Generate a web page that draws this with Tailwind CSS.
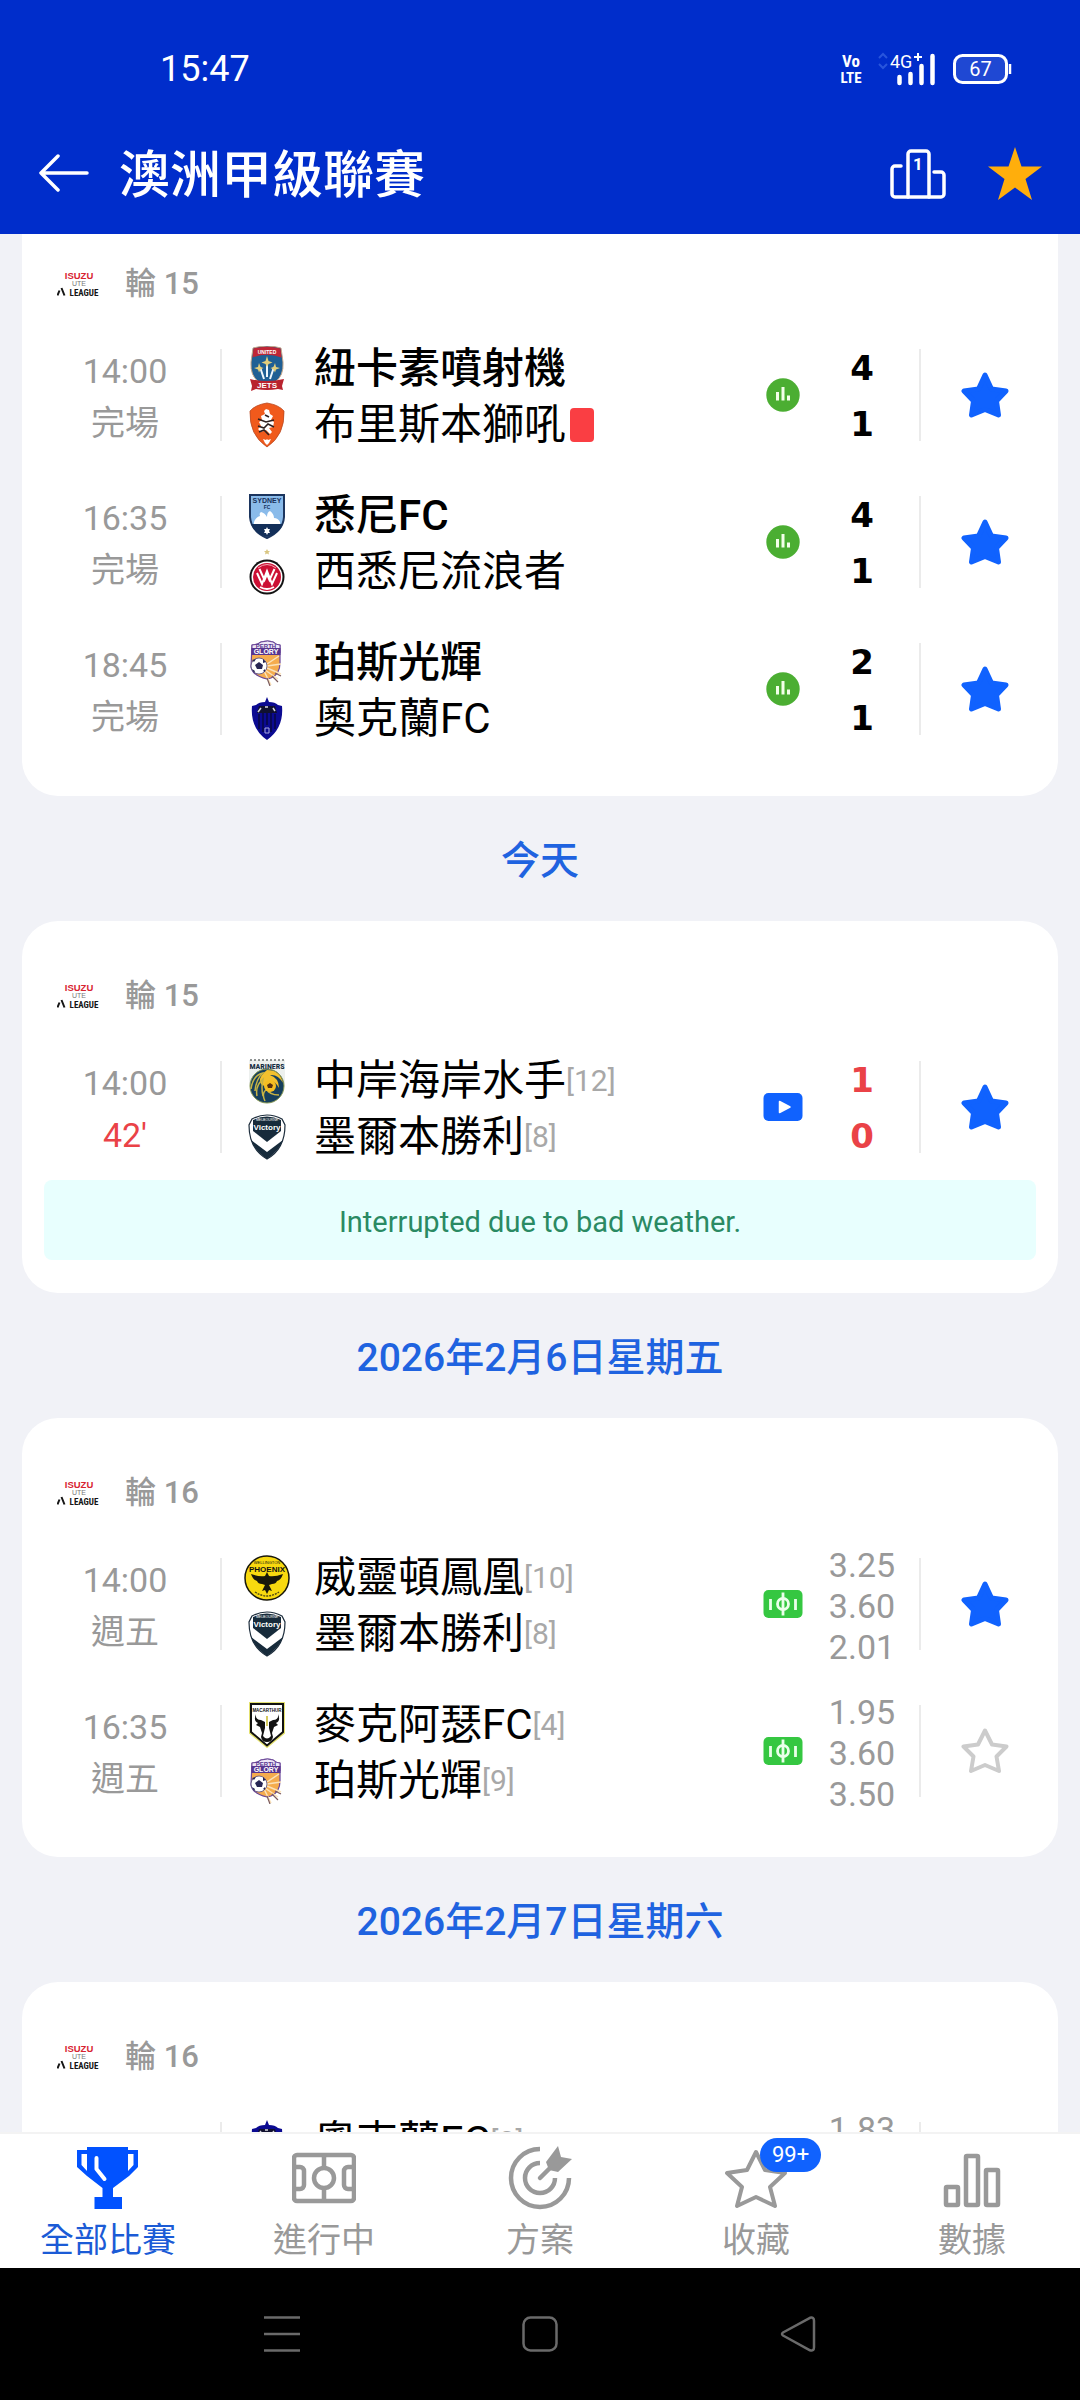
<!DOCTYPE html>
<html lang="zh-Hant"><head>
<meta charset="utf-8"/>
<meta content="width=device-width, initial-scale=1.0" name="viewport"/>
<title>澳洲甲級聯賽</title>
<script src="https://cdn.jsdelivr.net/npm/@tailwindcss/browser@4"></script>
<style>
        body {
            font-family: Roboto, 'Noto Sans CJK TC', sans-serif;
        }
        .font-score {
            font-family: 'DejaVu Sans', sans-serif;
        }
        .font-narrow {
            font-family: 'Liberation Sans Narrow', 'Roboto Condensed', Roboto, sans-serif;
        }
    </style>
</head>
<body class="flex h-screen flex-col bg-[#f1f2f7] text-black">

<!-- Shared icons and club crests -->
<svg class="hidden" xmlns="http://www.w3.org/2000/svg">
<symbol id="star" viewBox="0 0 48 46">
<path d="M24 3 L30.5 17 L45 19 L35.5 29 L37.5 43 L24 37.5 L10.5 43 L12.5 29 L3 19 L17.5 17Z" fill="#1062fe" stroke="#1062fe" stroke-width="5" stroke-linejoin="round"/>
</symbol>
<symbol id="star-outline" viewBox="0 0 48 46">
<path d="M24 2.5 L31 16.5 L45.5 18.5 L35.5 28.5 L38 43 L24 37 L10 43 L12.5 28.5 L2.5 18.5 L17 16.5Z" fill="none" stroke="#ccc" stroke-width="4" stroke-linejoin="round"/>
</symbol>
<symbol id="result" viewBox="0 0 40 34">
<circle cx="20" cy="17" r="16.7" fill="#4bae32"/>
<path d="M14.5 14v8.500M20 9v13.500M25.500 17.500v5" stroke="#f3ffe9" stroke-width="3"/>
</symbol>
<symbol id="video" viewBox="0 0 40 30">
<rect x="0.5" y="1" width="39" height="28" rx="5" fill="#1062fe"/>
<path d="M16.5 9.5v11l10.500-5.500z" fill="#fff" stroke="#fff" stroke-width="1.5" stroke-linejoin="round"/>
</symbol>
<symbol id="pitch" viewBox="0 0 40 30">
<rect x="0.5" y="1" width="39" height="28" rx="5" fill="#35c741"/>
<g fill="none" stroke="#eaffea" stroke-width="2.8"><circle cx="20" cy="15" r="5.5"/><path d="M20 3.500v23M7.500 10v11M32.500 10v11"/></g>
</symbol>
<symbol id="aleague" viewBox="0 0 44 26">
<text x="22" y="7.5" font-family="Liberation Sans" font-size="9.5" font-weight="700" text-anchor="middle" fill="#d8232f">ISUZU</text>
<text x="22" y="14.5" font-family="Liberation Sans" font-size="7" text-anchor="middle" fill="#777">UTE</text>
<path d="M0.5 24.500l2-5M4.500 17l3 7.500" stroke="#151515" stroke-width="2"/>
<text class="font-narrow" x="27" y="24.5" font-size="9" font-weight="700" text-anchor="middle" fill="#151515">LEAGUE</text>
</symbol>
<symbol id="jets" viewBox="0 0 44 46">
<path d="M8 2q14-4 28 0l2 14q1 14-8 20H14Q5 30 6 16z" fill="#1f5f94" stroke="#c9a98a" stroke-width="1"/>
<path d="M8.500 2.500q13.500-3.500 27 0l1 9Q22 6 7.500 11.500z" fill="#c02636"/>
<text x="22" y="8" font-family="Liberation Sans" font-size="5" font-weight="700" text-anchor="middle" fill="#fff">UNITED</text>
<path d="M22 14v17M15 21l4 12M29 21l-4 12" stroke="#eef6fb" stroke-width="2"/>
<path d="M22 10l1.500 5 4 1.500-4 1.500-1.500 3-1.500-3-4-1.500 4-1.500zM14 17l1.500 4 3 1-3 1.500-1.500 3-1-3-4-1.500 4-1zM30 17l1 4 4 1-4 1.500-1 3-1.500-3-3-1.500 3-1z" fill="#e2ce7c"/>
<path d="M5 33q17 4 34 0l-2 7 1 4-5-1q-11 2-22 0l-5 2 1-5z" fill="#b9232e"/>
<text x="22" y="42" font-family="Liberation Sans" font-size="8" font-weight="700" text-anchor="middle" fill="#fff">JETS</text>
</symbol>
<symbol id="roar" viewBox="0 0 44 46">
<path d="M22 1Q34 3 39 9q1 24-17 36Q4 33 5 9q5-6 17-8z" fill="#f05a1c" stroke="#b94b25" stroke-width="0.8"/>
<path d="M21 7l3 1 1 4 3 2-2 4 3 2-1 5-4 1 3 4-2 2-4-4-5 2-3-3 3-3-2-4 3-2-1-4 4-2-1-3z" fill="#fff"/>
<path d="M13 17l8 3 8-2M13 24l6 2 4-4 6 3M14 30l5-2 5 5M20 13l4 2" fill="none" stroke="#2e2020" stroke-width="1.6"/>
<path d="M18 37l3 1 1-1 1 1 3-1-2 4-2 2-2-2z" fill="#fff"/>
</symbol>
<symbol id="sydney" viewBox="0 0 44 46">
<path d="M5 2h34v22q-1 14-17 21Q6 38 5 24z" fill="#8abbea" stroke="#1c355e" stroke-width="2"/>
<path d="M6 31h32q-3 9-16 13Q9 40 6 31z" fill="#132f59"/>
<text x="22" y="10" font-family="Liberation Sans" font-size="7" font-weight="700" text-anchor="middle" fill="#17315b">SYDNEY</text>
<text x="22" y="16" font-family="Liberation Sans" font-size="5" font-weight="700" text-anchor="middle" fill="#17315b">FC</text>
<path d="M9 29q2-5 6-6-1-3 1-4 4 1 6 5 0-5 3-6 4 3 4 7 4 0 6 4v2H9z" fill="#fff"/>
<path d="M22 34l1 2h2l-1 2 1 2h-2l-1 2-1-2h-2l1-2-1-2h2z" fill="#fff"/>
</symbol>
<symbol id="wanderers" viewBox="0 0 44 46">
<path d="M22 0l1 2h2l-1.500 1.500.5 2-2-1-2 1 .5-2L19 2h2z" fill="#d9c682"/>
<circle cx="22" cy="28" r="17.5" fill="#121212"/>
<circle cx="22" cy="28" r="15.5" fill="#fff"/>
<circle cx="22" cy="28" r="14" fill="#cc1034"/>
<path d="M12 24l5 11 5-13 5 13 5-11M14.500 20l5 11 2.500-6 2.500 6 5-11M15 38q7 4 14 0" fill="none" stroke="#fff" stroke-width="2"/>
<path d="M13 19q9-7 18 0" fill="none" stroke="#f3a7b2" stroke-width="1"/>
</symbol>
<symbol id="glory" viewBox="0 0 44 46">
<path d="M7 5q6 0 9-3 7-2 12 0 3 3 7 3v18q0 11-9 15l-4 1Q8 36 6 27z" fill="#f5ac4e" stroke="#6a4799" stroke-width="1.2"/>
<path d="M7 5q6 0 9-3 7-2 12 0 3 3 7 3v8H7z" fill="#eee7f7" stroke="#6a4799" stroke-width="1"/>
<path d="M6.500 8h29v7h-29z" fill="#57358f"/>
<text x="21" y="7.5" font-family="Liberation Sans" font-size="6" font-weight="700" text-anchor="middle" fill="#57358f">PERTH</text>
<text x="21" y="14" font-family="Liberation Sans" font-size="7" font-weight="700" text-anchor="middle" fill="#fff">GLORY</text>
<path d="M22 24l12-8M22 26l14-2M22 28l14 6M20 30l13 9M19 31l7 14" stroke="#fbe3bb" stroke-width="1.5"/>
<path d="M30 33l6 3M27 36l6 6M22 38l3 8" stroke="#7b5a5c" stroke-width="1.2"/>
<circle cx="14" cy="26" r="8" fill="#fff" stroke="#50477a" stroke-width="0.8"/>
<path d="M14 22l4 3-1 4h-5l-2-4zM7 20l4-1-2 3zM18 19l3 3-3 1zM7 29l3 2-1 2zM18 31l2-2v3z" fill="#272653"/>
</symbol>
<symbol id="auckland" viewBox="0 0 44 46">
<path d="M22 1l2 5q6 0 9 3l4 1q2 22-15 34Q5 32 7 10l4-1q3-3 9-3z" fill="#0b0a91"/>
<path d="M14 10h16l2 7H12z" fill="#10102f"/>
<path d="M14 18v15M18 17v19M22 17v12M26 17v19M30 18v15" stroke="#080843" stroke-width="1.5"/>
<path d="M13 16l3-4M20 11h3M28 12l2 3" stroke="#d7d7df" stroke-width="1.5"/>
<path d="M20 32h4v5h-4z" fill="none" stroke="#aaa9df" stroke-width="1"/>
</symbol>
<symbol id="mariners" viewBox="0 0 44 46">
<path d="M4 2h36v21q0 15-18 22Q4 38 4 23z" fill="#edf0ee"/>
<ellipse cx="22" cy="28" rx="17" ry="17" fill="#163f5c" stroke="#8b9b55" stroke-width="1"/>
<path d="M22 12q13 0 16 13-5-9-13-8 9 3 9 13-4-8-10-7 6 6-1 12 0-7-6-8-6-6 5-15z" fill="#f3c12e"/>
<path d="M6 31q2-14 12-16-7 6-8 18M12 38q-2-10 6-17-2 9 0 17M20 43q-4-8 2-12 2 6 12 6" fill="none" stroke="#c7b444" stroke-width="1.5"/>
<circle cx="25" cy="28" r="6" fill="#f5be22"/><path d="M25 25l3 2-1 3h-4l-1-3z" fill="#57300e"/>
<text class="font-narrow" x="22" y="11" font-size="8" font-weight="700" text-anchor="middle" fill="#132c40">MARINERS</text>
<path d="M5 2h34" stroke="#6b7070" stroke-width="1.5" stroke-dasharray="2 2"/>
</symbol>
<symbol id="victory" viewBox="0 0 44 46">
<path d="M7 5q15-8 30 0l3 6q0 24-18 34Q4 35 4 11z" fill="#fff" stroke="#1c2c3b" stroke-width="1.2"/>
<path d="M8 6q14-7 28 0v11L22 28 8 17z" fill="#172b3b"/>
<path d="M6 26q4 11 16 19 12-8 16-19l-16 12z" fill="#172b3b"/>
<text x="22" y="7" font-family="Liberation Sans" font-size="3.5" text-anchor="middle" fill="#fff">MELBOURNE</text>
<text x="22" y="16" font-family="Liberation Sans" font-size="8" font-weight="700" text-anchor="middle" fill="#fff">Victory</text>
</symbol>
<symbol id="phoenix" viewBox="0 0 46 46">
<circle cx="23" cy="23" r="22" fill="#f8d90f" stroke="#19180b" stroke-width="1.5"/>
<text x="23" y="8.5" font-family="Liberation Sans" font-size="4" text-anchor="middle" fill="#111">WELLINGTON</text>
<text x="23" y="16.5" font-family="Liberation Sans" font-size="8" font-weight="700" text-anchor="middle" fill="#111">PHOENIX</text>
<path d="M23 17l2 4q6 1 14-2-2 6-6 7-1 3-5 3l-3 1 3 6-3-1-2 4-2-4-3 1 3-6-3-1q-4 0-5-3-4-1-6-7 8 3 14 2z" fill="#19180b"/>
<path d="M11 37q12 8 24 0" fill="none" stroke="#504a12" stroke-width="1.5" stroke-dasharray="2 1"/>
</symbol>
<symbol id="macarthur" viewBox="0 0 44 46">
<path d="M5 1h34v30L22 45 5 31z" fill="#fff" stroke="#e4e16e" stroke-width="2"/>
<path d="M6 2h32v28L22 43.500 6 30z" fill="#fff" stroke="#111" stroke-width="2"/>
<text x="22" y="9.5" font-family="Liberation Sans" font-size="4.5" font-weight="700" text-anchor="middle" fill="#111">MACARTHUR</text>
<path d="M11 12q-1 6 5 6l4 2v6l-2 8q4 5 8 0l-2-8v-6l4-2q6 0 5-6 3 7-2 9l2 2-4 2-2 6 1 4q-1 5-6 5t-6-5l1-4-2-6-4-2 2-2q-5-2-2-9z" fill="#111"/>
<path d="M22 14v10" stroke="#d5ca5d" stroke-width="2"/>
<path d="M19 34h2M23 34h2" stroke="#fff" stroke-width="1"/>
</symbol>
</svg>

<header class="bg-[#002dcb] text-white">
<div class="flex h-[138px] items-center justify-between pr-[68px] pl-[160px]">
<span class="text-[36px]">15:47</span>
<div class="flex items-center gap-4">
<svg class="h-8 w-6 overflow-visible" viewBox="0 0 24 32" fill="currentColor" font-weight="700">
<text class="font-narrow" x="13" y="14" font-size="17" text-anchor="middle">Vo</text>
<text class="font-narrow" x="13" y="30" font-size="15" text-anchor="middle">LTE</text>
</svg>
<svg class="h-8 w-[58px] overflow-visible" viewBox="0 0 58 32" fill="none" stroke="currentColor">
<path d="M1 5l4-4 4 4M1 11l4 4 4-4" stroke="#2855dc" stroke-width="2"/>
<text x="12" y="15" font-size="18" fill="currentColor" stroke="none">4G</text>
<path d="M36 4h8M40 0v8" stroke-width="2"/>
<path d="M21.500 24v6M32.500 21v9M43.500 13v17M54.500 3v27" stroke-width="4.5" stroke-linecap="round"/>
</svg>
<svg class="h-8 w-[60px]" viewBox="0 0 60 32">
<rect x="2.5" y="2.5" width="52" height="27" rx="8" fill="#1f48d3" stroke="#fff" stroke-width="3"/>
<path d="M58 11v10" stroke="#fff" stroke-width="2.5"/>
<text x="28.500" y="23" font-size="20" text-anchor="middle" fill="#fff">67</text>
</svg>
</div>
</div>
<div class="flex h-24 items-center pr-[38px] pb-6 pl-[38px]">
<a href="#" aria-label="返回" class="mr-[30px]">
<svg class="h-10 w-[51px]" viewBox="0 0 51 40" fill="none" stroke="currentColor" stroke-width="3.5" stroke-linecap="round" stroke-linejoin="round"><path d="M20 2L3 19l17 17M3 19h46"/></svg>
</a>
<h1 class="flex-1 pt-1 text-[51px] leading-[68px] font-medium">澳洲甲級聯賽</h1>
<button type="button" aria-label="排名" class="mr-[42px]">
<svg class="h-[50px] w-14" viewBox="0 0 56 50" fill="none" stroke="currentColor" stroke-width="3.5" stroke-linecap="round">
<path d="M11 17H5a3 3 0 0 0-3 3v25a3 3 0 0 0 3 3h46a3 3 0 0 0 3-3V26a3 3 0 0 0-3-3h-7"/>
<path d="M18 48V5a3 3 0 0 1 3-3h15a3 3 0 0 1 3 3v43"/>
<text x="28" y="21" font-size="17" font-weight="700" text-anchor="middle" fill="currentColor" stroke="none">1</text>
</svg>
</button>
<button type="button" aria-label="收藏聯賽">
<svg class="h-[54px] w-[54px]" viewBox="0 0 54 54"><path d="M27 0L33.500 19.500H54L37.500 32L44 53L27 40.500L10 53L16.500 32L0 19.500H20.500Z" fill="#ffae0c"/></svg>
</button>
</div>
</header>

<main id="schedule" class="min-h-0 flex-1 overflow-y-auto px-[22px] [scrollbar-width:none]">
<!-- Match days will be inserted here -->
</main>

<nav class="grid h-[136px] grid-cols-5 border-t-2 border-[#f3f3f3] bg-white pt-3 text-center text-[34px] leading-9 text-[#999]">
<a href="#" class="flex flex-col items-center gap-3 text-[#1b5bd6]">
<svg class="h-16 w-16" viewBox="-1 -1 64 64">
<path d="M10 0h41v3h10v17L52 29 36 41v9h9v12H17.500V50h8v-9L10 29 0 20V3h10z" fill="#0152ff"/>
<path d="M4.500 7H10v17l-5.500-6zM51 7h5.500v11L51 24z" fill="#fff"/>
<path d="M19.500 11v11l8 10" fill="none" stroke="#fff" stroke-width="4" stroke-linecap="round" stroke-linejoin="round"/>
</svg>
<span>全部比賽</span>
</a>
<a href="#" class="flex flex-col items-center gap-3">
<svg class="h-16 w-16" viewBox="0 0 64 64" fill="none" stroke="currentColor" stroke-width="4.5">
<rect x="2" y="9" width="60" height="46" rx="3"/>
<path d="M32 9v13M32 42v13M2 21h6a4 4 0 0 1 4 4v14a4 4 0 0 1-4 4H2M62 21h-6a4 4 0 0 0-4 4v14a4 4 0 0 0 4 4h6"/>
<circle cx="32" cy="32" r="10"/>
</svg>
<span>進行中</span>
</a>
<a href="#" class="flex flex-col items-center gap-3">
<svg class="h-16 w-16" viewBox="0 0 64 64" fill="none" stroke="currentColor" stroke-width="4.5">
<path d="M32 3a29 29 0 1 0 29 29M32 17a15 15 0 1 0 15 15"/>
<path d="M32 32l12-12" stroke-linecap="round"/>
<path d="M38 16L50 0l3 11 11 2-14 13-9-2z" fill="currentColor" stroke="none"/>
</svg>
<span>方案</span>
</a>
<a href="#" class="relative flex flex-col items-center gap-3">
<svg class="h-16 w-16" viewBox="0 0 64 64" fill="none" stroke="currentColor" stroke-width="4" stroke-linejoin="round"><path d="M32 6l9 18 20 3-15 14 5 19-19-9-19 9 5-19L3 27l20-3z"/></svg>
<span>收藏</span>
<b class="absolute -top-2 left-1/2 ml-1 rounded-full bg-[#1062fe] px-3 text-[22px] leading-[34px] font-normal text-white">99+</b>
</a>
<a href="#" class="flex flex-col items-center gap-3">
<svg class="h-16 w-16" viewBox="0 0 64 64" fill="none" stroke="currentColor" stroke-width="4.5">
<rect x="6" y="41" width="12" height="18" rx="1"/><rect x="26" y="10" width="12" height="49" rx="1"/><rect x="46" y="24" width="12" height="35" rx="1"/>
</svg>
<span>數據</span>
</a>
</nav>

<footer class="grid h-[132px] grid-cols-3 place-items-center bg-black px-[153px] text-[#6a6a6a]">
<button type="button" aria-label="選單"><svg class="h-9 w-9" viewBox="0 0 36 36" stroke="currentColor" stroke-width="2.5"><path d="M0 1.500h36M0 18h36M0 34.500h36"/></svg></button>
<button type="button" aria-label="主頁"><svg class="h-9 w-9" viewBox="0 0 36 36" fill="none" stroke="currentColor" stroke-width="2.5"><rect x="1.5" y="1.5" width="33" height="33" rx="7"/></svg></button>
<button type="button" aria-label="上一頁"><svg class="h-9 w-9" viewBox="0 0 36 36" fill="none" stroke="currentColor" stroke-width="2.5" stroke-linejoin="round"><path d="M3 16.500L30 1.800q4-1 4 3v26.500q0 4-4 3L3 19.500q-2-1.500 0-3z"/></svg></button>
</footer>

<script>
    const days = [
        {
            round: '輪 15',
            continued: true,
            matches: [
                { time: '14:00', status: '完場', icon: 'result', score: [4, 1], fav: true, teams: [
                    { crest: 'jets', name: '紐卡素噴射機', won: true }, { crest: 'roar', name: '布里斯本獅吼', redCard: true }] },
                { time: '16:35', status: '完場', icon: 'result', score: [4, 1], fav: true, teams: [
                    { crest: 'sydney', name: '悉尼FC', won: true }, { crest: 'wanderers', name: '西悉尼流浪者' }] },
                { time: '18:45', status: '完場', icon: 'result', score: [2, 1], fav: true, teams: [
                    { crest: 'glory', name: '珀斯光輝', won: true }, { crest: 'auckland', name: '奧克蘭FC' }] }
            ]
        },
        {
            title: '今天',
            round: '輪 15',
            matches: [
                { time: '14:00', status: "42'", live: true, icon: 'video', score: [1, 0], fav: true, note: 'Interrupted due to bad weather.', teams: [
                    { crest: 'mariners', name: '中岸海岸水手', rank: 12 }, { crest: 'victory', name: '墨爾本勝利', rank: 8 }] }
            ]
        },
        {
            title: '2026年2月6日星期五',
            round: '輪 16',
            matches: [
                { time: '14:00', status: '週五', icon: 'pitch', odds: ['3.25', '3.60', '2.01'], fav: true, teams: [
                    { crest: 'phoenix', name: '威靈頓鳳凰', rank: 10 }, { crest: 'victory', name: '墨爾本勝利', rank: 8 }] },
                { time: '16:35', status: '週五', icon: 'pitch', odds: ['1.95', '3.60', '3.50'], fav: false, teams: [
                    { crest: 'macarthur', name: '麥克阿瑟FC', rank: 4 }, { crest: 'glory', name: '珀斯光輝', rank: 9 }] }
            ]
        },
        {
            title: '2026年2月7日星期六',
            round: '輪 16',
            matches: [
                { time: '12:00', status: '', icon: 'pitch', odds: ['1.83'], fav: false, teams: [
                    { crest: 'auckland', name: '奧克蘭FC', rank: 2 }] }
            ]
        }
    ];

    function teamLine(team) {
        return `
            <div class="flex h-14 items-center">
                <div class="flex w-[90px] justify-center"><svg class="h-[46px] w-[46px]"><use href="#${team.crest}"/></svg></div>
                <span class="pl-[2px] text-[42px] leading-[56px] ${team.won ? 'font-medium' : ''}">${team.name}</span>
                ${team.rank ? `<span class="text-[30px] text-[#a8a8a8]">[${team.rank}]</span>` : ''}
                ${team.redCard ? '<i class="ml-1 h-[34px] w-6 rounded bg-[#fa3e43]"></i>' : ''}
            </div>`;
    }

    function matchRow(match) {
        const numbers = match.odds
            ? `<div class="h-[129px] pt-[6px] text-[34px] leading-[41px] text-[#999]">${match.odds.map(o => `<div>${o}</div>`).join('')}</div>`
            : `<div class="font-score pt-[2px] text-[34px] leading-[56px] font-bold ${match.live ? 'text-[#ea4247]' : ''}">${match.score.map(s => `<div>${s}</div>`).join('')}</div>`;
        return `
            <div class="flex h-[147px] items-center">
                <div class="h-[108px] w-[198px] pt-1 pl-2 text-center text-[34px] leading-[52px] text-[#999]">
                    <div>${match.time}</div>
                    <div class="${match.live ? 'text-[#ea4247]' : ''}">${match.status}</div>
                </div>
                <div class="h-[92px] w-[2px] bg-[#ebebeb]"></div>
                <div class="h-[116px] flex-1 pt-1">${match.teams.map(teamLine).join('')}</div>
                <div class="flex w-11 justify-center"><svg class="h-[34px] w-10"><use href="#${match.icon}"/></svg></div>
                <div class="w-[114px] text-center">${numbers}</div>
                <div class="h-[92px] w-[2px] bg-[#ebebeb]"></div>
                <div class="flex w-[137px] justify-center pr-[10px]">
                    <button type="button" aria-label="收藏" aria-pressed="${match.fav}"><svg class="h-[46px] w-12"><use href="#${match.fav ? 'star' : 'star-outline'}"/></svg></button>
                </div>
            </div>
            ${match.note ? `<p class="mx-[22px] rounded-lg bg-[#e8fffe] pt-1 text-center text-[29px] leading-[76px] text-[#2a8a63]">${match.note}</p>` : ''}`;
    }

    document.getElementById('schedule').innerHTML = days.map(day => `
        ${day.title ? `<h2 class="pt-[5px] text-center text-[39px] leading-[120px] font-medium text-[#1f63e0]">${day.title}</h2>` : ''}
        <section class="bg-white ${day.continued ? 'rounded-b-[36px] pb-[34px]' : 'rounded-[36px] pb-[33px]'}">
            <div class="flex items-center gap-6 pl-[35px] text-[31px] leading-[74px] font-medium text-[#999] ${day.continued ? 'pt-[13px]' : 'pt-[38px]'}">
                <svg class="h-[26px] w-11"><use href="#aleague"/></svg>
                <span>${day.round}</span>
            </div>
            ${day.matches.map(matchRow).join('')}
        </section>`).join('');
</script>

</body></html>
